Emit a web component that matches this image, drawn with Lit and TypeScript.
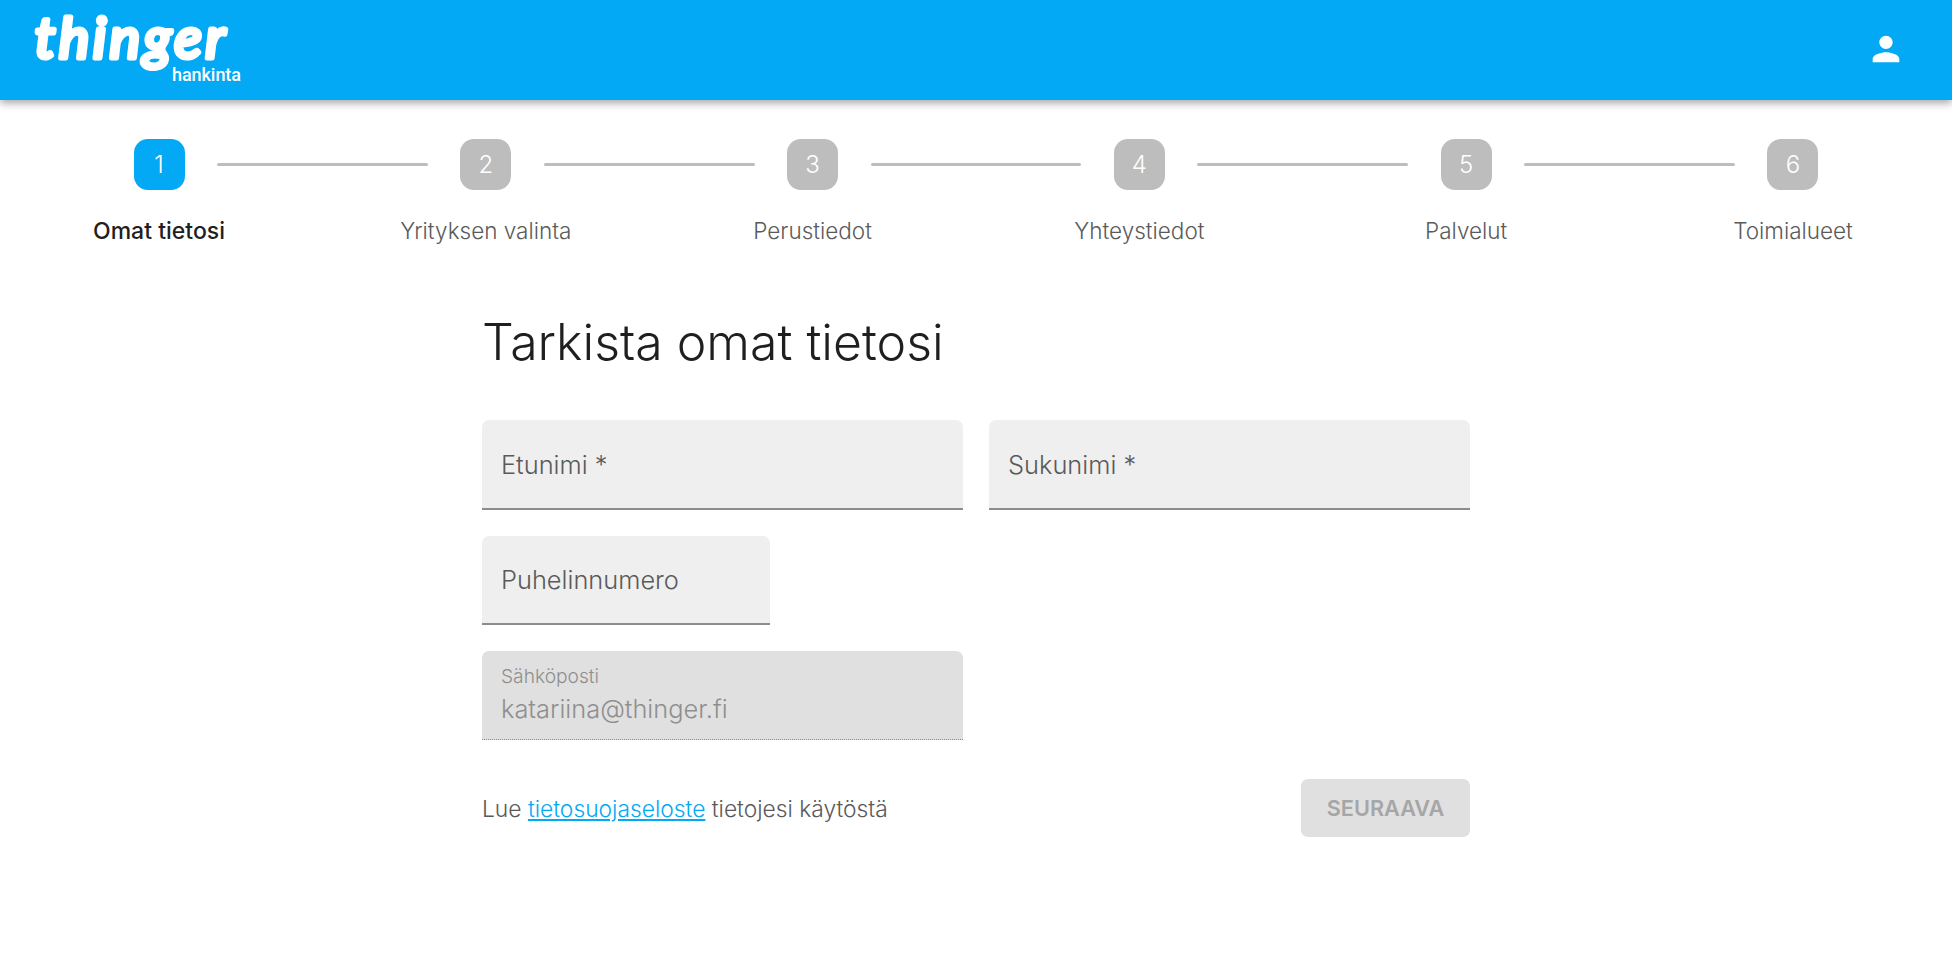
import { LitElement, html, css } from "lit";
import { customElement } from "lit/decorators.js";

const STEPS = ["Omat tietosi", "Yrityksen valinta", "Perustiedot", "Yhteystiedot", "Palvelut", "Toimialueet"];

@customElement("app-root")
export class AppRoot extends LitElement {
  static styles = css`
    :host { display: block; min-height: 960px; background: #fff; font-family: Inter, Roboto, sans-serif; color: #1f1f1f; }
    .header { height: 100px; background: #03a9f4; box-shadow: 0 3px 8px rgba(0,0,0,.36); display: flex; align-items: flex-start; justify-content: space-between; position: relative; }
    .logo { display: block; width: 260px; height: 100px; }
    .logo text { fill: #fff; }
    .word { font-family: "Lato", sans-serif; font-weight: 400; font-style: italic; font-size: 57px; stroke: #fff; stroke-width: 5px; stroke-linejoin: round; stroke-linecap: round; }
    .sub { font-family: Roboto, sans-serif; font-weight: 500; font-size: 18px; }
    .user { width: 40px; height: 40px; margin: 29px 46px 0 0; fill: #fff; }
    .stepper { display: flex; padding: 39px 101px 0; }
    .step { width: 116px; flex: none; display: flex; flex-direction: column; align-items: center; }
    .num { width: 51px; height: 51px; border-radius: 14px; background: #bdbdbd; color: #fff; font-size: 24px; font-weight: 300; display: flex; align-items: center; justify-content: center; }
    .step.active .num { background: #03a9f4; }
    .label { margin-top: 27px; line-height: 28px; font-size: 22.5px; white-space: nowrap; color: #5a5a5a; font-weight: 300; }
    .step.active .label { color: #1f1f1f; font-weight: 500; font-size: 23px; }
    .line { flex: 1; height: 3px; margin-top: 24px; background: #bdbdbd; border-radius: 2px; }
    .form { width: 988px; margin: 0 auto; padding-top: 65px; }
    h1 { margin: 0; font-size: 50px; line-height: 64px; font-weight: 300; color: #1f1f1f; }
    .grid { margin-top: 46px; display: grid; grid-template-columns: 1fr 1fr; grid-template-rows: 90px 89px 89px; column-gap: 26px; row-gap: 26px; }
    .field { box-sizing: border-box; background: #efefef; border-radius: 7px 7px 0 0; border-bottom: 2px solid #8c8c8c; padding: 0 19px; display: flex; flex-direction: column; justify-content: center; color: #5a5a5a; font-size: 25.4px; font-weight: 300; }
    .phone { width: 288px; grid-column: 1; }
    .disabled { grid-column: 1; background: #e0e0e0; border-bottom: 1px dotted #8c8c8c; color: #8f8f8f; padding-top: 3px; }
    .disabled small { font-size: 19.2px; line-height: 24px; font-weight: 300; }
    .disabled span { line-height: 41px; font-weight: 300; }
    .foot { margin-top: 39px; display: flex; justify-content: space-between; align-items: center; font-size: 22.8px; font-weight: 300; color: #5a5a5a; }
    a { color: #03a9f4; text-decoration: underline; }
    .btn { width: 169px; height: 58px; border: 0; border-radius: 7px; background: #e0e0e0; color: #a6a6a6; font-family: Inter, sans-serif; font-size: 21.7px; font-weight: 600; padding: 0; }
  `;

  render() {
    return html`
      <header class="header">
        <svg class="logo" viewBox="0 0 260 100" role="img" aria-label="thinger hankinta">
          <text class="word" x="35" y="58" textLength="190">thinger</text>
          <text class="sub" x="172" y="81" textLength="69">hankinta</text>
        </svg>
        <svg class="user" viewBox="0 0 24 24"><path d="M12 12c2.21 0 4-1.79 4-4s-1.79-4-4-4-4 1.79-4 4 1.79 4 4 4zm0 2c-2.67 0-8 1.34-8 4v2h16v-2c0-2.66-5.33-4-8-4z"/></svg>
      </header>
      <nav class="stepper">
        ${STEPS.map((s, i) => html`
          ${i > 0 ? html`<div class="line"></div>` : ""}
          <div class="step ${i === 0 ? "active" : ""}">
            <div class="num">${i + 1}</div>
            <div class="label">${s}</div>
          </div>`)}
      </nav>
      <main class="form">
        <h1>Tarkista omat tietosi</h1>
        <div class="grid">
          <div class="field">Etunimi *</div>
          <div class="field">Sukunimi *</div>
          <div class="field phone">Puhelinnumero</div>
          <div class="field disabled"><small>Sähköposti</small><span>katariina@thinger.fi</span></div>
        </div>
        <div class="foot">
          <div>Lue <a href="#">tietosuojaseloste</a> tietojesi käytöstä</div>
          <button class="btn" disabled>SEURAAVA</button>
        </div>
      </main>
    `;
  }
}
